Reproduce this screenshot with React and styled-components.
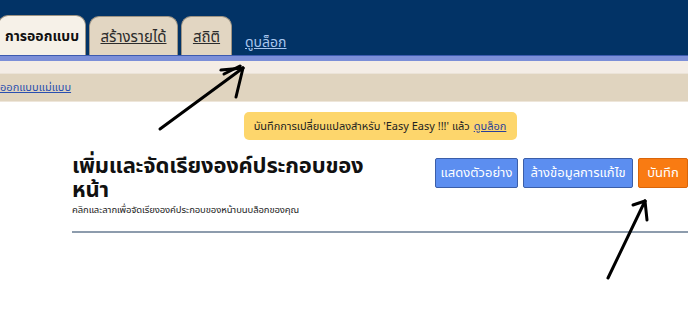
import React from 'react';
import styled, { createGlobalStyle } from 'styled-components';

const thai = `Tahoma, "Noto Sans Thai", "Noto Sans", "DejaVu Sans", sans-serif`;

const Global = createGlobalStyle`
  html, body { margin: 0; padding: 0; background: #ffffff; }
  body { font-family: ${thai}; width: 688px; height: 309px; overflow: hidden; }
`;

const Page = styled.div`
  position: relative;
  width: 688px;
  height: 309px;
  overflow: hidden;
  background: #ffffff;
`;

const Header = styled.div`
  height: 55px;
  background: #023366;
  display: flex;
  align-items: flex-end;
  gap: 3px;
  box-sizing: border-box;
`;

const Tab = styled.div`
  height: ${p => (p.active ? 40 : 39)}px;
  width: ${p => p.w}px;
  box-sizing: border-box;
  margin-left: ${p => p.ml || 0}px;
  background: ${p => (p.active ? '#f6f1e8' : '#e2d6c2')};
  border: 1px solid #9d9383;
  border-bottom: none;
  border-radius: 10px 10px 0 0;
  display: flex;
  align-items: center;
  justify-content: center;
  font-size: ${p => (p.active ? 14 : 15)}px;
  font-weight: ${p => (p.active ? 700 : 400)};
  color: ${p => (p.active ? '#111' : '#2b2b2b')};
  text-decoration: ${p => (p.active ? 'none' : 'underline')};
  padding-top: 2px;
`;

const HeaderLink = styled.a`
  align-self: center;
  margin-left: 10px;
  margin-top: 30px;
  color: #a9c6ee;
  font-size: 14px;
  text-decoration: underline;
`;

const BlueRule = styled.div`
  height: 5px;
  background: #7c8fd8;
  border-top: 1px solid #3d5bb0;
`;

const LightStrip = styled.div`
  height: 12px;
  background: #f4ede6;
  border-bottom: 1px solid #ebe3d8;
`;

const SubBar = styled.div`
  height: 27px;
  background: #e0d4bf;
  display: flex;
  align-items: center;
  border-bottom: 1px solid #eee6da;
`;

const SubLink = styled.a`
  font-size: 11px;
  color: #2a4fb0;
  text-decoration: underline;
`;

const Main = styled.div`
  padding-left: 72px;
  padding-top: 10px;
`;

const NoticeRow = styled.div`
  display: flex;
  justify-content: center;
`;

const Notice = styled.div`
  height: 28px;
  width: 273px;
  box-sizing: border-box;
  background: #fdd66c;
  border-radius: 5px;
  display: flex;
  align-items: center;
  justify-content: center;
  font-size: 11px;
  color: #222;
  gap: 4px;
`;

const NoticeLink = styled.a`
  color: #2a3f9a;
  text-decoration: underline;
`;

const TitleRow = styled.div`
  display: flex;
  justify-content: space-between;
  align-items: flex-start;
  margin-top: 12px;
  height: 79px;
  border-bottom: 2px solid #8d9cad;
`;

const TitleBlock = styled.div`
  display: flex;
  flex-direction: column;
`;

const Title = styled.h1`
  margin: 0;
  font-size: 22px;
  line-height: 24px;
  font-weight: 700;
  color: #111;
  padding-top: 3px;
  letter-spacing: -0.2px;
`;

const Subtitle = styled.div`
  font-size: 9.5px;
  color: #222;
  margin-top: 0;
  letter-spacing: -0.1px;
`;

const Buttons = styled.div`
  display: flex;
  gap: 5px;
  margin-top: 6px;
`;

const Button = styled.div`
  height: 30px;
  width: ${p => p.w}px;
  box-sizing: border-box;
  background: ${p => (p.orange ? '#f97b12' : '#5c8ef0')};
  border: 1px solid ${p => (p.orange ? '#d9650a' : '#3b5ea8')};
  border-radius: 2px;
  color: #ffffff;
  font-size: 13px;
  display: flex;
  align-items: center;
  justify-content: center;
`;

const Arrows = styled.svg`
  position: absolute;
  left: 0;
  top: 0;
  pointer-events: none;
`;

export default function App() {
  return (
    <Page>
      <Global />
      <Header>
        <Tab active w={88} ml={-2}>การออกแบบ</Tab>
        <Tab w={89}>สร้างรายได้</Tab>
        <Tab w={51}>สถิติ</Tab>
        <HeaderLink>ดูบล็อก</HeaderLink>
      </Header>
      <BlueRule />
      <LightStrip />
      <SubBar>
        <SubLink>ออกแบบแม่แบบ</SubLink>
      </SubBar>
      <Main>
        <NoticeRow>
          <Notice>
            บันทึกการเปลี่ยนแปลงสำหรับ 'Easy Easy !!!' แล้ว <NoticeLink>ดูบล็อก</NoticeLink>
          </Notice>
        </NoticeRow>
        <TitleRow>
          <TitleBlock>
            <Title>เพิ่มและจัดเรียงองค์ประกอบของ<br />หน้า</Title>
            <Subtitle>คลิกและลากเพื่อจัดเรียงองค์ประกอบของหน้าบนบล็อกของคุณ</Subtitle>
          </TitleBlock>
          <Buttons>
            <Button w={83}>แสดงตัวอย่าง</Button>
            <Button w={110}>ล้างข้อมูลการแก้ไข</Button>
            <Button orange w={50}>บันทึก</Button>
          </Buttons>
        </TitleRow>
      </Main>
      <Arrows width="688" height="309" viewBox="0 0 688 309">
        <g stroke="#000" strokeWidth="3" strokeLinecap="round" fill="none">
          <path d="M160 129 L243 68" />
          <path d="M243 68 L221 70" />
          <path d="M240 66 L224 74" />
          <path d="M243 68 L236 97" />
          <path d="M608 278 L645 201" />
          <path d="M645 201 L633 205" />
          <path d="M645 201 L647 220" />
        </g>
      </Arrows>
    </Page>
  );
}
